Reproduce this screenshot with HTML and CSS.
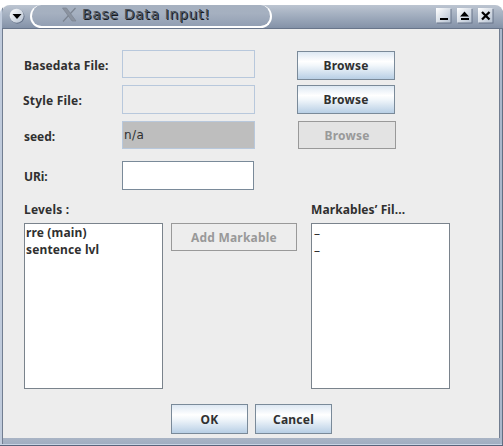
FILE: index.html
```html
<!DOCTYPE html>
<html lang="en">
<head>
<meta charset="utf-8">
<title>Base Data Input!</title>
<link rel="stylesheet" href="styles.css">
</head>
<body>
<div class="window">
  <header class="titlebar">
    <svg class="menu" width="16" height="16" viewBox="0 0 16 16">
      <defs><linearGradient id="g" x1="0" y1="0" x2="1" y2="1"><stop offset="0" stop-color="#fff"/><stop offset="1" stop-color="#b4c0d0"/></linearGradient></defs>
      <circle cx="8.3" cy="8.5" r="7.2" fill="#667389"/><circle cx="7.7" cy="7.7" r="7" fill="url(#g)"/><path d="M3.5 6h9L8 11z" fill="#000"/>
    </svg>
    <div class="caption">
      <svg class="xlogo" width="15" height="15" viewBox="0 0 15 15"><path d="M.5 1h4l9.5 13h-4z" fill="#8b93a0" stroke="#7b8490" stroke-width=".7"/><path d="M13.5 1L8.5 6.5M6.5 8.5L1 14.5" stroke="#7b8490" stroke-width="1.2"/></svg>
      <h1>Base Data Input!</h1>
    </div>
    <div class="controls">
      <svg width="16" height="16" viewBox="0 0 16 16"><path d="M1 1h14.5v14.5H1z" fill="#667389"/><path d="M0 0h14.5v14.5H0z" fill="url(#g)"/><path d="M4 10h8v2H4z"/></svg>
      <svg width="16" height="16" viewBox="0 0 16 16"><path d="M1 1h14.5v14.5H1z" fill="#667389"/><path d="M0 0h14.5v14.5H0z" fill="url(#g)"/><path d="M3 8.5L7.5 3.5 12 8.5zM4 10h8v2H4z"/></svg>
      <svg width="16" height="16" viewBox="0 0 16 16"><path d="M1 1h14.5v14.5H1z" fill="#667389"/><path d="M0 0h14.5v14.5H0z" fill="url(#g)"/><path d="M4 4l7.5 7.5M11.5 4L4 11.5" stroke="#000" stroke-width="2.3"/></svg>
    </div>
  </header>
  <main class="content">
    <div class="row base"><label>Basedata File:</label><div class="field"></div><button>Browse</button></div>
    <div class="row style"><label>Style File:</label><div class="field"></div><button>Browse</button></div>
    <div class="row seed"><label>seed:</label><div class="field filled">n/a</div><button disabled>Browse</button></div>
    <div class="row uri"><label>URi:</label><div class="field editable"></div></div>
    <div class="headings"><span class="levels">Levels :</span><span class="marks">Markables’ Fil...</span></div>
    <div class="lists">
      <ul class="names"><li>rre (main)</li><li>sentence lvl</li></ul>
      <button class="add" disabled>Add Markable</button>
      <ul class="files"><li>–</li><li>–</li></ul>
    </div>
    <div class="actions"><button class="ok">OK</button><button class="cancel">Cancel</button></div>
  </main>
</div>
</body>
</html>
```
FILE: styles.css
```css
* { box-sizing: border-box; }
body { margin: 0; background: #fff; font: bold 12px/17px "Noto Sans", sans-serif; color: #303030; overflow: hidden; }
.window {
  width: 503px; height: 441px; margin-top: 5px; padding-bottom: 8px;
  background: linear-gradient(#a9b4c5, #a0aec2) 3px 433px / 497px 6px no-repeat,
    linear-gradient(#c8d4e4, #c8d4e4) 0 439px / 502px 1px no-repeat,
    linear-gradient(90deg, #c0cbdc 0 2px, #727e91 2px 3px, #ededed 3px 499px, #727e91 499px 500px, #aab7cb 500px 502px, #626f83 502px);
  border-bottom: 1px solid #58647c; border-radius: 9px 9px 0 0;
}
.titlebar {
  display: flex; height: 24px; margin-left: 2px; padding: 0 9px 0 7px;
  background: linear-gradient(#bcc5d1, #a2aebf 45%, #8492a8);
  border-bottom: 1px solid #68758a; border-radius: 8px 8px 0 0;
}
.menu { margin-top: 3px; }
.caption {
  display: flex; width: 242px; height: 23px; margin-left: 5px; padding: 1px 0 0 30px;
  border: 2px solid #fff; border-top: 0; border-radius: 14px;
  background: linear-gradient(#a6b1c0, #a5b0c0 40%, #929fb3);
}
.xlogo { margin-top: 1px; flex: none; }
h1 { margin: -1px 0 0 5px; font: 14px/18px "DejaVu Sans", sans-serif; letter-spacing: .63px; color: #4b525c; text-shadow: 1px 1px 0 #14181e; white-space: nowrap; }
.controls { display: flex; gap: 5px; margin: 3px 0 0 auto; }
.content { height: 409px; padding: 21px 0 0 24px; }
.row { display: flex; }
label { width: 98px; padding-top: 7px; letter-spacing: .12px; }
.field { width: 133px; height: 28px; border: 1px solid #b8c8dc; }
button {
  height: 29px; padding: 0; border: 1px solid #7a8a99; color: #303030; font: inherit; letter-spacing: .2px;
  background: linear-gradient(#dde8f3, #fff 35%, #f2f7fb 50%, #b8cfe5);
}
button:disabled { height: 28px; background: #e3e3e3; color: #999; border-color: #999; }
.row button { width: 98px; margin-left: 42px; }
.base button { margin-top: 1px; }
.style { margin-top: 5px; }
.style .field { height: 29px; }
.style label { margin-left: -1px; width: 99px; letter-spacing: .2px; }
.seed { margin-top: 7px; }
.seed label { letter-spacing: -.05px; }
.uri label { letter-spacing: -.1px; }
.seed button { margin-left: 43px; }
.filled { padding: 5px 0 0 1px; background: #bebebe; font: 12px/17px "DejaVu Sans", sans-serif; letter-spacing: .4px; }
.uri { margin-top: 12px; }
.uri .field { width: 132px; height: 29px; background: #fff; border-color: #7a8a99; }
.headings { display: flex; margin-top: 11px; height: 22px; letter-spacing: .1px; }
.levels { width: 287px; letter-spacing: .2px; }
.lists { display: flex; align-items: flex-start; }
ul { width: 139px; height: 166px; margin: 0; padding: 0 0 0 1px; border: 1px solid #7a838c; background: #fff; list-style: none; letter-spacing: .14px; }
.files { padding: 1px 0 0 2px; font-weight: 400; }
.add { width: 126px; margin: 0 14px 0 8px; }
.add:disabled { background: #ededed; }
.actions { display: flex; gap: 7px; margin: 15px 0 0 147px; }
.actions button { width: 77px; height: 30px; }
```
